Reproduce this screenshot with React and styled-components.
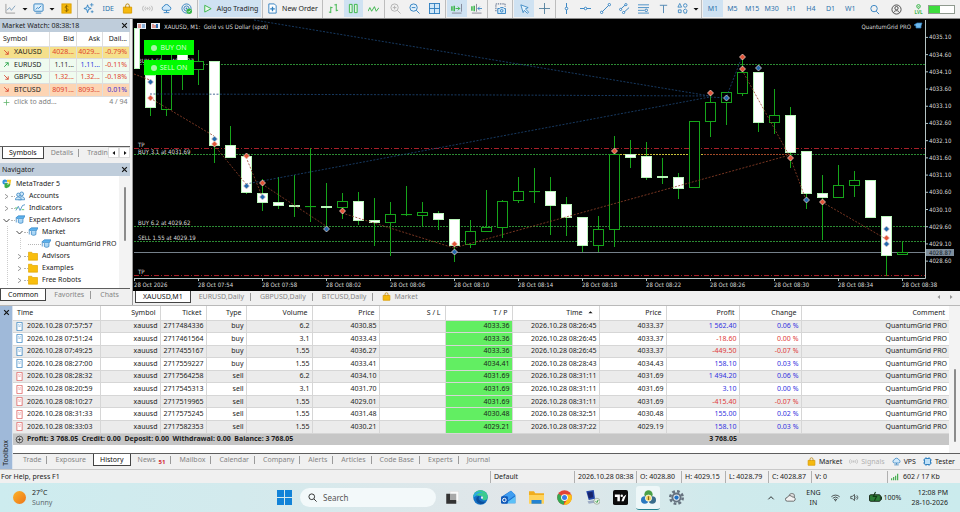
import React, { useState } from "react";
import styled, { createGlobalStyle } from "styled-components";

const GlobalStyle = createGlobalStyle`
  * { box-sizing: border-box; }
  body {
    margin: 0;
    background: #f0f0f0;
    color: #1c1c1c;
    font: 7px/10px "Noto Sans", "Open Sans", sans-serif;
  }
  button, input {
    font: inherit;
    color: inherit;
    padding: 0;
    border: 0;
    background: none;
  }
  a { color: inherit; text-decoration: none; }
  svg { display: block; flex: none; }
`;

const BLUE = "#2f7fbf";
const GREEN = "#35b345";

/* ---------- icons ---------- */

const ICONS = {
  lineChart: <><path d="M1 1v10h10" stroke="#999" /><path d="M2 8l3-3 2 3 4-5" stroke="#7fa0bb" /></>,
  template: <><rect x="1" y="1" width="10" height="8" rx="1" fill="#d9edfb" stroke={BLUE} /><path d="M3 7l2-2 1 1 3-3M3 11h6" stroke={BLUE} /></>,
  dollar: <><rect x="1" y="1" width="10" height="10" fill="#f4b80c" stroke="#dca000" /><path d="M8 4C7 3 4.500 3 4.500 4.600S8 6 8 7.600 5 9 4 8M6 2v8" stroke="#7d5900" strokeWidth=".8" /></>,
  sparkle: <><path d="M5 2l1 3 3 1-3 1-1 3.500L4 7 1 6l3-1z" fill="#d9edfb" stroke={BLUE} /><path d="M9.500 0v4M7.500 2h4M10 8v3M8.500 9.500h3" stroke={BLUE} strokeWidth=".8" /></>,
  bag: <><path d="M1.500 4.500h9V11h-9z" fill="#f5b90e" stroke="#d99b00" /><path d="M4 5V3a2 2 0 0 1 4 0v2" stroke="#b98400" /></>,
  signal: <g stroke="#aaa" strokeWidth=".8"><circle cx="6" cy="6" r=".8" /><path d="M4 4a3 3 0 0 0 0 4M8 4a3 3 0 0 1 0 4M2 3a4 4 0 0 0 0 6M10 3a4 4 0 0 1 0 6" /></g>,
  cloud: <><path d="M3 8a2.200 2.200 0 0 1 0-4.300 3.200 3.200 0 0 1 6 0A2.200 2.200 0 0 1 9 8z" fill="#cfe8fa" stroke={BLUE} /><path d="M6 8v2M3 10.500h6" stroke={BLUE} /></>,
  radar: <><circle cx="6" cy="6" r="5" stroke={BLUE} /><circle cx="6" cy="6" r="2.800" stroke={BLUE} /><circle cx="6" cy="6" r="1" fill={BLUE} /><circle cx="9" cy="9" r="3" fill={GREEN} /><path d="M7.500 9l1 1 2-2" stroke="#fff" strokeWidth=".8" /></>,
  play: <path d="M3 2.500l7 3.700-7 3.700z" fill="#e9f8ea" stroke={GREEN} />,
  newOrder: <><path d="M2 1h6l2 2v8H2z" fill="#fff" stroke={BLUE} /><path d="M6 4v5M3.500 6.500h5" stroke={BLUE} strokeWidth="1.400" /></>,
  bars: <path d="M3 4v7M1 10h2M3 5h2M9 1v8M7 2h2M9 8h2" stroke={GREEN} />,
  candles: <path d="M1.500 1.500h3v9h-3zM7 1.500h3v9H7z" fill="#dff5e1" stroke={GREEN} />,
  zigzag: <path d="M0 9l2-4 2 4 3-5 2 5 3-4" stroke={GREEN} />,
  zoomIn: <g stroke="#b0b0b0"><circle cx="5" cy="5" r="4" /><path d="M8 8l3.500 3.500M3 5h4M5 3v4" /></g>,
  zoomOut: <g stroke={BLUE}><circle cx="5" cy="5" r="4" fill="#e2f1fb" /><path d="M8 8l3.500 3.500M3 5h4" /></g>,
  tile: <><rect x=".5" y=".5" width="11" height="11" fill="#cfe7f8" stroke={BLUE} /><path d="M6 0v12M0 6h12" stroke={BLUE} /></>,
  shiftEnd: <><path d="M1 3.500v5M3.500 3v6" stroke={GREEN} strokeWidth="1.600" /><path d="M5 6h4.500M7.500 4l2 2-2 2" stroke={GREEN} /><path d="M11.500 1v8.500M1 11h10.500" stroke="#778" strokeWidth=".9" /></>,
  autoScroll: <><path d="M1 3.500v5M3.500 3v6" stroke={GREEN} strokeWidth="1.600" /><path d="M6 1v8.500M1 11h10.500" stroke="#778" strokeWidth=".9" /><path d="M12 6H7.500M9.500 4l-2 2 2 2" stroke={BLUE} strokeWidth=".9" /></>,
  camera: <><path d="M1 9V1h10v3" stroke="#457" strokeDasharray="1.500 1" /><path d="M3 6h2l1-1h3l1 1h1.500v5.500H3z" fill="#cfe7f8" stroke={BLUE} /><circle cx="7.300" cy="8.500" r="1.400" stroke={BLUE} /></>,
  cursor: <path d="M2 2l8 3-3 1.500 3.500 3.500-1.500 1.200L5.800 8 4.500 10.500z" fill="#e4f3fc" stroke={BLUE} strokeWidth=".9" />,
  cross: <path d="M6 0v12M0 6h12M4.500 6h3M6 4.500v3" stroke="#55829f" />,
  vline: <><path d="M6 0v12" stroke={BLUE} /><circle cx="6" cy="6" r="1.400" fill="#fff" stroke={BLUE} /></>,
  hline: <><path d="M0 6h12" stroke={BLUE} /><circle cx="6" cy="6" r="1.400" fill="#fff" stroke={BLUE} /></>,
  trend: <g stroke={BLUE} fill="#fff"><path d="M2 10l8-8" /><circle cx="1.800" cy="10.200" r="1.300" /><circle cx="10.200" cy="1.800" r="1.300" /></g>,
  channel: <g stroke={BLUE} fill="#fff"><path d="M1.500 7l6-5.500M5 10.500L11 5" /><circle cx="1.800" cy="7" r="1.200" /><circle cx="7.500" cy="1.800" r="1.200" /><circle cx="5" cy="10.400" r="1.200" /></g>,
  fibo: <g stroke={BLUE}><path d="M0 2h12M0 5h12M0 8h7M0 11h12" strokeWidth=".9" /><circle cx="9" cy="8" r="1.400" /></g>,
  text: <path d="M2 2.500h8M6 2.500V11" stroke="#4d83b0" />,
  shapes: <g stroke={BLUE} strokeWidth=".9"><path d="M1 4.500l2-4 2 4zM1.500 7.500h3v3h-3zM9 6.500l2 1.500-.8 3H7.800L7 8z" /><circle cx="9" cy="2.700" r="1.900" /></g>,
  search: <><circle cx="5.500" cy="5" r="3.500" stroke={BLUE} /><path d="M8 8l3 3" stroke={BLUE} /></>,
  user: <g stroke="#444"><circle cx="6" cy="6" r="5" /><circle cx="6" cy="4.500" r="1.800" /><path d="M2.800 9.500c1-3 5.400-3 6.400 0" /></g>,
  level: <><circle cx="6" cy="2.600" r="2" stroke={GREEN} /><path d="M5 2.600h2M6 4.600v1.200" stroke={GREEN} strokeWidth=".8" /><text x="6" y="11" textAnchor="middle" fontSize="5" fontWeight="bold" fill={GREEN}>LVL</text></>,
  accounts: <g fill="#cce6f9" stroke={BLUE} strokeWidth=".9"><circle cx="8" cy="3.500" r="2.300" /><path d="M4 10.500c0-5 8-5 7.500 0z" /><circle cx="4" cy="4.500" r="2" /><path d="M.5 10.500c0-4.500 7-4.500 7 0z" /></g>,
  indicator: <><path d="M1 9l3-5 2 5 3-6 3-1" stroke={BLUE} strokeWidth=".9" /><path d="M0 6h3M8 8h3" stroke={GREEN} strokeWidth=".9" /></>,
  expert: <><path d="M1 3.500L4 1h8l-2 3.500H4z" fill="#5cb2ee" stroke={BLUE} strokeWidth=".8" /><path d="M4 5v4c2 1.500 4 1 5.500 0V5M1.500 4v5" fill="#a9d6f6" stroke={BLUE} strokeWidth=".9" /></>,
  folder: <path d="M.5 1.500h4l1 1.500h6v8H.5z" fill="#f9be0d" stroke="#e0a500" strokeWidth=".8" />,
  meta: <><circle cx="3.500" cy="3.500" r="3" fill="#2f92dc" /><path d="M6 1h5l-1 6H6z" fill="#f4c72a" /><path d="M3 6c2-2 6-1 7 1-1 4-6 5-7 3z" fill="#3eae49" /><path d="M3 4h5l-1 3" stroke="#fff" /></>,
  chip: <><rect x="2" y="2" width="8" height="8" rx="1" fill="#bfe1f8" stroke={BLUE} strokeWidth="1.300" /><path d="M4 0v2M8 0v2M4 10v2M8 10v2M0 4h2M0 8h2M10 4h2M10 8h2" stroke={BLUE} /></>,
  doc: <><path d="M2.500 .5h7v11h-7z" fill="#fff" stroke="currentColor" /><path d="M4.500 3.500h1M6.500 3.500h1M4.500 5.500h3" stroke="currentColor" strokeWidth=".8" /></>,
  plusCircle: <><circle cx="6" cy="6" r="4.500" stroke="#222" strokeWidth=".9" /><path d="M3.500 6h5M6 3.500v5" stroke="#222" strokeWidth=".9" /></>,
  plus: <path d="M6 1v10M1 6h10" stroke="#5bb267" strokeWidth="1.300" />,
  down: <path d="M2 2l7 7M9 4v5H4" stroke="#d8452e" strokeWidth="1.500" />,
  up: <path d="M2 10l7-7M4 3h5v5" stroke="#27a348" strokeWidth="1.500" />,
  close: <path d="M2 2l8 8M10 2l-8 8" stroke="#111" strokeWidth="2" />,
  chevronRight: <path d="M4 3l4 3-4 3" stroke="#777" />,
  chevronDown: <path d="M2 4l4 4 4-4" stroke="#333" strokeWidth="1.200" />,
  chevronUp: <path d="M2 8l4-4 4 4" stroke="#222" strokeWidth="1.400" />,
  caret: <path d="M1 4h10L6 9z" fill="#111" />,
  triLeft: <path d="M8 2v8L3 6z" fill="#111" />,
  triRight: <path d="M4 2v8l5-4z" fill="#111" />,
  bars4: <path d="M1 11V8M4 11V6M7 11V4M10 11V1" stroke="#2fa53b" strokeWidth="1.600" />,
  weather: <><circle cx="7.500" cy="4.500" r="3" fill="#ddd" stroke="#555" strokeWidth=".7" /><path d="M2.500 10a2 2 0 0 1 0-4 3 3 0 0 1 5.500-.5A2.300 2.300 0 0 1 9.500 10z" fill="#f2f2f2" stroke="#444" strokeWidth=".8" /></>,
  wifi: <g stroke="#222"><path d="M.5 5a8 8 0 0 1 11 0M2.300 7a5.500 5.500 0 0 1 7.400 0M4 9a3 3 0 0 1 4 0" /><circle cx="6" cy="10.300" r=".5" /></g>,
  speaker: <g stroke="#222" strokeWidth=".9"><path d="M1 4.500h2L6 2v8L3 7.500H1zM7.500 4.500a2 2 0 0 1 0 3M9 3a4 4 0 0 1 0 6" /></g>,
  battery: <><rect x=".5" y="3.500" width="10" height="6" rx="1" fill="#2b7d36" stroke="#1b2b1b" strokeWidth=".9" /><path d="M11.500 5v3M6 1L4 5h3L5 9" stroke="#113a16" /></>,
  start: <path d="M0 0h5.600v5.600H0zM6.400 0H12v5.600H6.400zM0 6.400h5.600V12H0zM6.400 6.400H12V12H6.400z" fill="#1283d8" />,
  taskView: <><rect x="4" y="1" width="7" height="8" fill="#fafafa" stroke="#ddd" strokeWidth=".5" /><path d="M1 3h3v5h5v3H1z" fill="#333" /><path d="M4 3h5v5H4z" fill="#a8a8a8" /></>,
  edge: <><circle cx="6" cy="6" r="5.800" fill="#1471c4" /><path d="M.2 6C0-1 11-2 11.800 5.500c.1 3-3.300 3.300-4.300 2 1-2-.5-3.500-2.500-2.700C3 4 1 4.500 .2 6z" fill="#3ccb8f" /><path d="M.2 6C.5 1 6 0 8.500 3 6 1.500 3 2.500 2 5z" fill="#2aa6e8" /><path d="M5 5c-1.500 2.500 1 5 4.800 4.300C8 12 4.500 11.800 3 9 2 7 3 5 5 5z" fill="#0c4f9c" /><path d="M7.300 7.400c-1.200-.6-1.300-2.200-.3-2.400 1.200 0 1.500 1.400.3 2.400z" fill="#e4eef0" /></>,
  outlook: <><path d="M1 5l7-4.500L11.500 4v6.500H2z" fill="#1c6fd0" /><path d="M2 5l6-4.500L11.500 4 6 8z" fill="#3f9df0" /><path d="M6 9l5.500-4v5.500H4z" fill="#5cc0f7" /><rect x="0" y="5" width="5.500" height="6" rx="1" fill="#0f58b8" /><circle cx="2.700" cy="8" r="1.400" stroke="#fff" strokeWidth=".8" /></>,
  explorer: <><path d="M0 1h4l1 1.500h7V10H0z" fill="#f0ad1e" /><path d="M0 4h12v7H0z" fill="#ffd35b" /><path d="M2 8h8v3H2z" fill="#2382d2" /></>,
  chrome: <><circle cx="6" cy="6" r="5.800" fill="#e34335" /><path d="M6 6L1 3a5.800 5.800 0 0 0 4.500 8.800z" fill="#33a853" /><path d="M6 3.500h5.300A5.800 5.800 0 0 1 5.500 11.800L8.500 7z" fill="#fbc116" /><circle cx="6" cy="6" r="2.700" fill="#fff" /><circle cx="6" cy="6" r="2" fill="#3b7ee8" /></>,
  remote: <><path d="M1 1l6-1 1 7-5 1z" fill="#2345a8" /><path d="M2 2l4-.7.600 4.500-3.600.700z" fill="#17246b" /><path d="M2 9l6-1 1 2-6 1z" fill="#9cabc4" /><circle cx="9.500" cy="9" r="2.400" fill="#e8efe6" stroke="#8a9a88" strokeWidth=".5" /><path d="M8.500 9l1 1 1-2" stroke="#2e9b3f" strokeWidth=".8" /></>,
  tv: <><rect x="0" y="0" width="12" height="12" rx="1.500" fill="#0c0c0c" /><path d="M1.500 3.500h4V9h-2V5.500h-2zM8 5.500L10.700 3.500 8.500 9H6.800z" fill="#fff" /><circle cx="7" cy="4.500" r="1" fill="#fff" /></>,
  mt: <><circle cx="6" cy="3.500" r="3.300" fill="#4a9f47" /><circle cx="3" cy="8" r="3" fill="#2a79c0" /><circle cx="9" cy="8" r="3" fill="#3a6d8c" /><circle cx="6" cy="6.500" r="2.500" fill="#f6d667" stroke="#fff" strokeWidth=".6" /><path d="M6 5v3" stroke="#8a6a10" /></>,
  gear: <><circle cx="6" cy="6" r="5" stroke="#66727f" strokeWidth="2" strokeDasharray="2.200 1.700" /><circle cx="6" cy="6" r="4" fill="#66727f" /><circle cx="6" cy="6" r="2.500" fill="#dfe7ee" /><circle cx="6" cy="6" r="1.700" fill="#1f70c4" /></>,
  magnifier: <><circle cx="5" cy="5" r="3.800" stroke="#222" strokeWidth="1.200" /><path d="M8 8l3.500 3.500" stroke="#222" strokeWidth="1.200" /></>,
};

const Icon = ({ name, size = 11 }) => (
  <svg width={size} height={size} viewBox="0 0 12 12" fill="none" aria-hidden="true">
    {ICONS[name]}
  </svg>
);

/* ---------- toolbar ---------- */

const Page = styled.div`
  min-height: 100vh;
  display: flex;
  flex-direction: column;
`;

const Toolbar = styled.header`
  display: flex;
  align-items: stretch;
  height: 19px;
  background: #f1f1f1;
  border-bottom: 1px solid #8c8c8c;
`;

const Group = styled.div`
  display: flex;
  width: ${props => props.$width}px;
  padding: 0 1px;
  border-right: ${props => (props.$last ? "0" : "1px solid #bdbdbd")};
`;

const ToolButton = styled.button`
  display: flex;
  align-items: center;
  justify-content: center;
  gap: 4px;
  flex: ${props => (props.$narrow ? "0 0 8px" : "1 1 0")};
  min-width: 0;
  margin-bottom: 1px;
  white-space: nowrap;
  color: ${props => (props.$blue ? "#2f74ad" : "#1c1c1c")};
  background: ${props => (props.$on ? "#cfe2f2" : "transparent")};
`;

const ToolEnd = styled.div`
  display: flex;
  align-items: center;
  gap: 4px;
  margin-left: auto;
  padding-right: 5px;
`;

const ToolIcons = styled.div`
  display: flex;
  gap: 11px;
`;

const Meter = styled.div`
  width: 27px;
  height: 9px;
  border: 1px solid #8f9a8f;
  background: linear-gradient(90deg, #3ddc3d 43%, #fff 43%);
`;

const TOOL_GROUPS = [
  { width: 78, items: ["lineChart", "caret", "template", "caret", "dollar"] },
  { width: 120, items: ["sparkle", "IDE", "bag", "signal", "cloud", "radar"] },
];

const MORE_GROUPS = [
  { width: 62, items: ["bars", "candles", "zigzag"], on: "candles" },
  { width: 61, items: ["zoomIn", "zoomOut", "tile"] },
  { width: 42, items: ["shiftEnd", "autoScroll"], on: "shiftEnd" },
  { width: 25, items: ["camera"] },
  { width: 43, items: ["cursor", "cross"], on: "cursor" },
  { width: 146, items: ["vline", "hline", "trend", "channel", "fibo", "text", "shapes", "caret"] },
];

const ToolGroup = ({ group }) => (
  <Group $width={group.width}>
    {group.items.map((item, i) => (
      <ToolButton key={i} aria-label={item} $narrow={item === "caret"} $on={group.on === item} $blue>
        {item === "IDE" ? "IDE" : <Icon name={item} size={item === "caret" ? 6 : 11} />}
      </ToolButton>
    ))}
  </Group>
);

const FRAMES = ["M1", "M5", "M15", "M30", "H1", "H4", "D1", "W1"];

const TopBar = () => {
  const [frame, setFrame] = useState("M1");
  return (
    <Toolbar>
      {TOOL_GROUPS.map((g, i) => <ToolGroup key={i} group={g} />)}
      <Group $width={65}>
        <ToolButton $on><Icon name="play" />Algo Trading</ToolButton>
      </Group>
      <Group $width={60}>
        <ToolButton><Icon name="newOrder" />New Order</ToolButton>
      </Group>
      {MORE_GROUPS.map((g, i) => <ToolGroup key={i} group={g} />)}
      <Group $width={159} $last>
        {FRAMES.map(f => (
          <ToolButton key={f} $blue $on={f === frame} onClick={() => setFrame(f)}>{f}</ToolButton>
        ))}
      </Group>
      <ToolEnd>
        <ToolIcons>
          <Icon name="search" />
          <Icon name="user" />
          <Icon name="level" />
        </ToolIcons>
        <Meter />
      </ToolEnd>
    </Toolbar>
  );
};

/* ---------- tabs ---------- */

const TabBar = styled.nav`
  display: flex;
  height: ${props => props.$height}px;
  padding-left: ${props => props.$indent || 0}px;
  background: #f0f0f0;
  overflow: hidden;
  border-top: ${props => (props.$line ? "1px solid #5e5e5e" : "0")};
`;

const Tab = styled.button`
  display: flex;
  align-items: center;
  gap: 3px;
  flex: none;
  height: 12px;
  padding: 0 ${props => props.$pad}px;
  white-space: nowrap;
  color: ${props => (props.$active ? "#111" : "#858585")};
  background-color: ${props => (props.$active ? "#fff" : "transparent")};
  background-image: ${props => (props.$divider ? "linear-gradient(#9a9a9a, #9a9a9a)" : "none")};
  background-position: right center;
  background-size: 1px 8px;
  background-repeat: no-repeat;
  border: ${props => (props.$active ? "solid #444" : "solid transparent")};
  border-width: 0 1px 1px;
`;

const Badge = styled.span`
  font-size: 6px;
  font-weight: bold;
  line-height: 6px;
  align-self: flex-end;
  color: #d32632;
`;

const Tabs = ({ items, initial, pad = 6 }) => {
  const [active, setActive] = useState(initial);
  return items.map((item, i) => {
    const next = items[i + 1];
    return (
      <Tab
        key={item.label}
        $pad={pad}
        $active={item.label === active}
        $divider={item.label !== active && next && next.label !== active}
        onClick={() => setActive(item.label)}
      >
        {item.icon && <Icon name={item.icon} size={9} />}
        {item.label}
        {item.badge && <Badge>{item.badge}</Badge>}
      </Tab>
    );
  });
};

const TabArrow = styled.button`
  display: flex;
  align-items: center;
  justify-content: center;
  flex: 0 0 11px;
  height: 11px;
  background: #fff;
  border: 1px solid #dadada;
`;

const TabClip = styled.div`
  display: flex;
  flex: 1 1 0;
  min-width: 0;
  overflow: hidden;
`;

/* ---------- side panels ---------- */

const Workspace = styled.div`
  display: flex;
`;

const Side = styled.aside`
  flex: none;
  width: 133px;
  padding-right: 2px;
  border-right: 1px solid #9a9a9a;
`;

const PanelTitle = styled.h2`
  display: flex;
  align-items: center;
  justify-content: space-between;
  height: 13px;
  margin: 0;
  padding: 0 2px;
  font-size: 7px;
  font-weight: normal;
  background: #bfcddb;
`;

const PanelBody = styled.div`
  height: ${props => props.$height}px;
  display: flex;
  align-items: flex-start;
  overflow: hidden;
  background: #fff;
`;

const WatchTable = styled.table`
  width: 100%;
  height: 76px;
  table-layout: fixed;
  border-collapse: collapse;
  th, td {
    height: 12px;
    padding: 0 2px 0 0;
    font-weight: normal;
    text-align: right;
    white-space: nowrap;
    overflow: hidden;
    border: solid #dedede;
    border-width: 0 1px 1px 0;
  }
  th { height: 14px; }
  th:first-child, td:first-child { text-align: left; padding-left: 3px; }
  tfoot td { border: 0; color: #808080; }
`;

const WatchRow = styled.tr`
  background: ${props => props.$bg};
`;

const Quote = styled.td`
  color: ${props => props.$color};
`;

const WithIcon = styled.span`
  display: flex;
  align-items: center;
  gap: ${props => props.$gap || 4}px;
`;

const QUOTES = [
  { dir: "down", bg: "#f5e08b", symbol: "XAUUSD", bid: ["4028...", "#e0442c"], ask: ["4029...", "#e0442c"], day: ["-0.79%", "#e0442c"] },
  { dir: "up", bg: "#effbef", symbol: "EURUSD", bid: ["1.11...", "#333"], ask: ["1.11...", "#2a3ee0"], day: ["-0.11%", "#e0442c"] },
  { dir: "down", bg: "#effbef", symbol: "GBPUSD", bid: ["1.32...", "#e0442c"], ask: ["1.32...", "#e0442c"], day: ["-0.18%", "#e0442c"] },
  { dir: "down", bg: "#fdd5b4", symbol: "BTCUSD", bid: ["8091...", "#e0442c"], ask: ["8093...", "#e0442c"], day: ["0.01%", "#4430d0"] },
];

const Tree = styled.ul`
  flex: 1;
  min-width: 0;
  margin: 0;
  padding: 2px 0 0 2px;
  list-style: none;
`;

const TreeRow = styled.li`
  display: flex;
  align-items: center;
  height: 12px;
  white-space: nowrap;
`;

const Guide = styled.span`
  width: 13px;
  height: 12px;
  background: linear-gradient(#ccc 50%, transparent 50%) 5px 0 / 1px 2px repeat-y;
`;

const Expander = styled.span`
  width: 13px;
  display: flex;
  align-items: center;
  &::after {
    content: "";
    flex: 1;
    border-top: 1px dotted #b5b5b5;
  }
`;

const TreeLabel = styled.span`
  margin-left: 4px;
`;

const ScrollTrack = styled.div`
  display: flex;
  flex-direction: column;
  align-items: center;
  align-self: stretch;
  justify-content: ${props => (props.$end ? "flex-end" : "flex-start")};
  flex: 0 0 11px;
  padding: 11px 0;
  background: #f3f3f3;
`;

const ScrollThumb = styled.div`
  width: 2px;
  height: ${props => props.$size}px;
  background: #8b8b8b;
  border-radius: 1px;
`;

const TREE = [
  { level: 0, icon: "meta", label: "MetaTrader 5" },
  { level: 1, icon: "accounts", label: "Accounts", mark: "chevronRight" },
  { level: 1, icon: "indicator", label: "Indicators", mark: "chevronRight" },
  { level: 1, icon: "expert", label: "Expert Advisors", mark: "chevronDown" },
  { level: 2, icon: "expert", label: "Market", mark: "chevronDown" },
  { level: 3, icon: "expert", label: "QuantumGrid PRO" },
  { level: 2, icon: "folder", label: "Advisors", mark: "chevronRight" },
  { level: 2, icon: "folder", label: "Examples", mark: "chevronRight" },
  { level: 2, icon: "folder", label: "Free Robots", mark: "chevronRight" },
];

const SideTabs = styled.div`
  height: 17px;
`;

const WATCH_TABS = [{ label: "Symbols" }, { label: "Details" }, { label: "Tradin" }];
const NAV_TABS = [{ label: "Common" }, { label: "Favorites" }, { label: "Chats" }];

const MarketWatch = () => (
  <>
    <PanelTitle>Market Watch: 08:38:18<Icon name="close" size={7} /></PanelTitle>
    <PanelBody $height={114}>
      <WatchTable>
        <colgroup><col /><col width="27" /><col width="26" /><col width="27" /></colgroup>
        <thead>
          <tr><th>Symbol</th><th>Bid</th><th>Ask</th><th>Dail...</th></tr>
        </thead>
        <tbody>
          {QUOTES.map(q => (
            <WatchRow key={q.symbol} $bg={q.bg}>
              <td><WithIcon><Icon name={q.dir} size={7} />{q.symbol}</WithIcon></td>
              <Quote $color={q.bid[1]}>{q.bid[0]}</Quote>
              <Quote $color={q.ask[1]}>{q.ask[0]}</Quote>
              <Quote $color={q.day[1]}>{q.day[0]}</Quote>
            </WatchRow>
          ))}
        </tbody>
        <tfoot>
          <tr>
            <td colSpan="3"><WithIcon><Icon name="plus" size={7} />click to add...</WithIcon></td>
            <td>4 / 94</td>
          </tr>
        </tfoot>
      </WatchTable>
    </PanelBody>
    <SideTabs>
      <TabBar $height={13} $indent={2} $line>
        <TabClip><Tabs items={WATCH_TABS} initial="Symbols" /></TabClip>
        <TabArrow aria-label="Previous tabs"><Icon name="triLeft" size={6} /></TabArrow>
        <TabArrow aria-label="Next tabs"><Icon name="triRight" size={6} /></TabArrow>
      </TabBar>
    </SideTabs>
  </>
);

const Navigator = () => (
  <>
    <PanelTitle>Navigator<Icon name="close" size={7} /></PanelTitle>
    <PanelBody $height={112}>
      <Tree>
        {TREE.map(node => (
          <TreeRow key={node.label}>
            {node.level > 1 && <Guide />}
            {node.level > 2 && <Guide />}
            {node.level > 0 && <Expander>{node.mark && <Icon name={node.mark} size={9} />}</Expander>}
            <Icon name={node.icon} size={10} />
            <TreeLabel>{node.label}</TreeLabel>
          </TreeRow>
        ))}
      </Tree>
      <ScrollTrack><ScrollThumb $size={54} /></ScrollTrack>
    </PanelBody>
    <TabBar $height={14} $line>
      <Tabs items={NAV_TABS} initial="Common" pad={7} />
    </TabBar>
  </>
);

/* ---------- chart ---------- */

const ChartArea = styled.section`
  flex: 1 1 0;
  min-width: 0;
`;

const ChartFrame = styled.div`
  position: relative;
  background: #000;
  svg { width: 100%; height: auto; }
`;

const ChartButtons = styled.div`
  position: absolute;
  top: 21px;
  left: 11px;
  display: grid;
  gap: 5px;
`;

const TradeButton = styled.button`
  display: flex;
  align-items: center;
  justify-content: center;
  gap: 3px;
  width: 50px;
  height: 15px;
  font-size: 7px;
  color: #d5ffd5;
  background: #00fb00;
  &::before {
    content: "";
    width: 6px;
    height: 6px;
    border-radius: 50%;
    background: #a5f5a5;
  }
`;

const ChartText = styled.text`
  font: 6px "DejaVu Sans Condensed", "DejaVu Sans", sans-serif;
  fill: ${props => props.$fill || "#dcdcdc"};
`;

// [wick top, wick bottom, body top, body bottom, falling]
const CANDLES = [
  [28, 68, 28, 68, 1],
  [75, 116, 75, 107, 1],
  [45, 116, 50, 109, 0],
  [54, 90, 54, 61, 1],
  [50, 85, 61, 69, 0],
  [61, 163, 61, 145, 1],
  [126, 157, 145, 157, 1],
  [156, 194, 156, 192, 1],
  [179, 211, 193, 202, 1],
  [177, 209, 202, 205, 1],
  [175, 217, 205, 206, 1],
  [148, 222, 206, 206, 0],
  [183, 229, 206, 207, 1],
  [193, 219, 201, 207, 0],
  [192, 225, 201, 220, 1],
  [198, 246, 220, 222, 1],
  [202, 256, 214, 222, 0],
  [186, 216, 214, 214, 0],
  [202, 227, 212, 215, 0],
  [211, 230, 213, 219, 1],
  [219, 262, 219, 245, 1],
  [220, 248, 231, 244, 0],
  [190, 232, 227, 231, 0],
  [200, 238, 201, 227, 0],
  [177, 203, 191, 200, 0],
  [168, 203, 191, 191, 0],
  [177, 235, 191, 205, 1],
  [197, 236, 204, 217, 1],
  [217, 252, 217, 245, 1],
  [216, 252, 229, 245, 0],
  [136, 247, 154, 229, 0],
  [140, 168, 154, 157, 1],
  [142, 180, 156, 177, 1],
  [158, 184, 176, 177, 1],
  [173, 199, 177, 188, 1],
  [121, 188, 121, 187, 0],
  [93, 137, 102, 121, 0],
  [92, 125, 92, 102, 0],
  [57, 96, 72, 93, 0],
  [72, 132, 72, 122, 1],
  [89, 134, 115, 122, 0],
  [107, 168, 115, 152, 1],
  [151, 209, 151, 193, 1],
  [175, 240, 193, 197, 1],
  [165, 198, 185, 197, 0],
  [171, 197, 180, 185, 0],
  [180, 217, 180, 217, 1],
  [216, 276, 216, 255, 1],
  [241, 255, 252, 254, 0],
];

const SELL = "#e2553a";
const BUY = "#2468ac";

// [x, y, colour]
const MARKS = [
  [150, 82, BUY], [150, 98, SELL], [214, 139, BUY], [214, 144, SELL],
  [246, 156, SELL], [246, 186, BUY], [262, 183, SELL], [262, 197, BUY],
  [326, 229, BUY], [342, 211, SELL], [454, 244, SELL], [454, 252, BUY],
  [614, 151, SELL], [710, 93, SELL], [726, 98, BUY], [742, 57, SELL],
  [742, 69, SELL], [758, 68, BUY], [790, 158, SELL], [806, 200, BUY],
  [822, 202, SELL], [886, 229, BUY], [886, 238, SELL], [886, 244, BUY],
];

const SELL_PATHS = "M134 74L150 80M150 98L214 136M214 145L246 184M246 157L262 196M262 184L326 226M342 213L454 248L790 155M742 70L790 157L806 200M822 202L886 239";
const BUY_PATHS = "M254 20L710 96M150 94L500 95L710 96M246 184L710 97L726 98L742 57";

const LEVELS = [
  { y: 147, label: "TP" },
  { y: 154, label: "BUY 3.1 at 4031.69" },
  { y: 225, label: "BUY 6.2 at 4029.62" },
  { y: 240, label: "SELL 1.55 at 4029.19" },
  { y: 274, label: "TP" },
  { y: 63, label: "BUY 1.55 at 4034.37" },
];

const PRICES = Array.from({ length: 14 }, (_, i) => (4035.1 - i * 0.5).toFixed(2));
const TIMES = ["28 Oct 2026", "28 Oct 07:54", "28 Oct 07:58", "28 Oct 08:02", "28 Oct 08:06", "28 Oct 08:10", "28 Oct 08:14", "28 Oct 08:18", "28 Oct 08:22", "28 Oct 08:26", "28 Oct 08:30", "28 Oct 08:34", "28 Oct 08:38"];

const Chart = () => (
  <svg viewBox="133 19 827 272" role="img" aria-label="XAUUSD M1 chart">
    <path d="M134 64.500H925M134 154.500H925M134 226.500H925M134 241.500H925" stroke="#2c8a33" strokeDasharray="2 1" />
    <path d="M614 154.500H704" stroke="#c9c23a" strokeDasharray="2 1" />
    <path d="M704 154.500H790" stroke="#a14b28" strokeDasharray="2 1" />
    <path d="M134 148.500H925M134 275.500H925" stroke="#a81f28" strokeDasharray="5 2 1 2" />
    <path d="M134 252.500H925" stroke="#75808a" />
    {LEVELS.map((l, i) => <ChartText key={i} x="138" y={l.y}>{l.label}</ChartText>)}
    {CANDLES.map(([hi, lo, top, bottom, falling], i) => {
      const x = 134 + i * 16;
      const first = i === 0;
      return (
        <g key={i} stroke="#16a51a">
          <path d={`M${x + 0.5} ${hi}V${top}M${x + 0.5} ${bottom}V${lo}`} />
          <rect
            x={first ? x + 0.5 : x - 4.5}
            y={top + 0.5}
            width={first ? 5 : 10}
            height={Math.max(bottom - top, 0.1)}
            fill={falling ? "#fff" : "#000"}
            stroke={falling ? "#b9f5b9" : "#16a51a"}
          />
        </g>
      );
    })}
    <path d={BUY_PATHS} fill="none" stroke="#1d4878" strokeWidth=".8" strokeDasharray="2 1.500" />
    <path d={SELL_PATHS} fill="none" stroke="#94432a" strokeWidth=".8" strokeDasharray="2 1.500" />
    {MARKS.map(([x, y, color], i) => (
      <path key={i} d={`M${x + 0.5} ${y - 3}l3 3-3 3-3-3z`} fill={color} stroke="#f4dcd4" strokeWidth=".7" />
    ))}
    <path d="M925.500 20V278.500M134 278.500H925.500" stroke="#b4c4c4" fill="none" />
    {PRICES.map((p, i) => {
      const y = 37.4 + i * 17.21;
      return (
        <g key={p}>
          <path d={`M926 ${y}h2`} stroke="#b4c4c4" />
          <ChartText x="929" y={y + 2}>{p}</ChartText>
        </g>
      );
    })}
    <rect x="926" y="249" width="28" height="7" fill="#7f8e9c" />
    <ChartText x="929" y="255" $fill="#101820">4028.87</ChartText>
    {TIMES.map((t, i) => (
      <g key={t}>
        <path d={`M${134.5 + i * 64} 279v2`} stroke="#b4c4c4" />
        <ChartText x={134 + i * 64} y="287">{t}</ChartText>
      </g>
    ))}
    <g>
      <path d="M137 23h9v6h-9z" fill="#e8eef5" />
      <path d="M138 25h3M138 27h3" stroke="#d0402e" />
      <path d="M142 25h3M142 27h3" stroke="#2c6fb4" />
      <path d="M151 23h9v6h-9z" fill="#e8eef5" />
      <path d="M153 24v4M155 25v3" stroke="#d0402e" />
      <path d="M157 24v4" stroke="#2c6fb4" strokeWidth="2" />
    </g>
    <ChartText x="164" y="29">XAUUSD, M1:&nbsp; Gold vs US Dollar (spot)</ChartText>
    <ChartText x="911" y="29" textAnchor="end">QuantumGrid PRO</ChartText>
    <path d="M914 25l3-2h5l-1 3v2h-5v-2z" fill="#6fb9ec" stroke="#2f7fbf" strokeWidth=".7" />
  </svg>
);

const ChartTabs = styled(TabBar)`
  padding-right: 6px;
`;

const TabScroll = styled.span`
  display: flex;
  gap: 6px;
  align-items: center;
  height: 12px;
  margin-left: auto;
  opacity: 0.4;
`;

const CHART_TABS = [
  { label: "XAUUSD,M1" },
  { label: "EURUSD,Daily" },
  { label: "GBPUSD,Daily" },
  { label: "BTCUSD,Daily" },
  { label: "Market", icon: "bag" },
];

const ChartPanel = () => (
  <ChartArea>
    <ChartFrame>
      <Chart />
      <ChartButtons>
        <TradeButton>BUY ON</TradeButton>
        <TradeButton>SELL ON</TradeButton>
      </ChartButtons>
    </ChartFrame>
    <ChartTabs $height={14} $indent={2}>
      <Tabs items={CHART_TABS} initial="XAUUSD,M1" pad={7} />
      <TabScroll><Icon name="triLeft" size={6} /><Icon name="triRight" size={6} /></TabScroll>
    </ChartTabs>
  </ChartArea>
);

/* ---------- toolbox ---------- */

const Toolbox = styled.section`
  display: flex;
  border-top: 1px solid #b9b9b9;
`;

const ToolboxStrip = styled.div`
  flex: 0 0 13px;
  display: flex;
  flex-direction: column;
  align-items: center;
  justify-content: space-between;
  padding: 3px 0;
  background: #9fb9d9;
  border-right: 1px solid #dbe4ee;
`;

const Vertical = styled.span`
  writing-mode: vertical-rl;
  transform: rotate(180deg);
`;

const ToolboxMain = styled.div`
  flex: 1;
  min-width: 0;
`;

const TableWrap = styled.div`
  display: flex;
  align-items: flex-start;
  height: 147px;
  background: #fff;
`;

const History = styled.table`
  flex: 1;
  height: 139px;
  table-layout: fixed;
  border-collapse: collapse;
  th, td {
    height: 12px;
    padding: 0 2px;
    font-weight: normal;
    text-align: right;
    white-space: nowrap;
    border: solid #d6d6d6;
    border-width: 0 1px 1px 0;
  }
  th { height: 14px; padding: 0 4px; }
  th:last-child, td:last-child { border-right: 0; }
  th:first-child { text-align: left; }
  tbody tr:nth-child(odd) { background: #ebebeb; }
  tfoot td {
    font-weight: bold;
    background: #c6c6c6;
    border: 0;
  }
`;

const TakeProfit = styled.td`
  background: #62ee62;
`;

const Signed = styled.td`
  color: ${props => (props.$negative ? "#e03a3a" : "#3232e0")};
`;

const DealTime = styled(WithIcon)`
  > svg { color: ${props => (props.$sell ? "#dd5a5a" : "#2f7fbf")}; }
`;

const SortHead = styled.span`
  display: inline-flex;
  align-items: center;
  gap: 5px;
  padding-right: 2px;
  svg { transform: rotate(180deg); }
`;

const DEALS = [
  ["2026.10.28 07:57:57", "2717484336", "buy", "6.2", "4030.85", "4033.36", "2026.10.28 08:26:45", "4033.37", "1 562.40", "0.06 %"],
  ["2026.10.28 07:51:24", "2717461564", "buy", "3.1", "4033.43", "4033.36", "2026.10.28 08:26:45", "4033.37", "-18.60", "0.00 %"],
  ["2026.10.28 07:49:25", "2717455167", "buy", "1.55", "4036.27", "4033.36", "2026.10.28 08:26:45", "4033.37", "-449.50", "-0.07 %"],
  ["2026.10.28 08:27:00", "2717559227", "buy", "1.55", "4033.41", "4034.41", "2026.10.28 08:28:43", "4034.43", "158.10", "0.03 %"],
  ["2026.10.28 08:28:32", "2717564258", "sell", "6.2", "4034.10", "4031.69", "2026.10.28 08:31:11", "4031.69", "1 494.20", "0.06 %"],
  ["2026.10.28 08:20:59", "2717545313", "sell", "3.1", "4031.70", "4031.69", "2026.10.28 08:31:11", "4031.69", "3.10", "0.00 %"],
  ["2026.10.28 08:10:27", "2717519965", "sell", "1.55", "4029.01", "4031.69", "2026.10.28 08:31:11", "4031.69", "-415.40", "-0.07 %"],
  ["2026.10.28 08:31:33", "2717575245", "sell", "1.55", "4031.48", "4030.48", "2026.10.28 08:32:51", "4030.48", "155.00", "0.02 %"],
  ["2026.10.28 08:33:03", "2717582353", "sell", "1.55", "4030.21", "4029.21", "2026.10.28 08:37:22", "4029.19", "158.10", "0.03 %"],
];

const COLUMNS = [87, 60, 46, 40, 66, 67, 66, 67, 87, 67, 73, 62];

const BoxLinks = styled.div`
  display: flex;
  align-items: center;
  gap: 7px;
  margin-left: auto;
  padding-right: 5px;
`;

const BoxLink = styled.a`
  display: flex;
  align-items: center;
  gap: 3px;
  color: ${props => (props.$muted ? "#b0b0b0" : "#1c1c1c")};
`;

const BOX_TABS = [
  { label: "Trade" },
  { label: "Exposure" },
  { label: "History" },
  { label: "News", badge: "51" },
  { label: "Mailbox" },
  { label: "Calendar" },
  { label: "Company" },
  { label: "Alerts" },
  { label: "Articles" },
  { label: "Code Base" },
  { label: "Experts" },
  { label: "Journal" },
];

const ToolboxPanel = () => (
  <Toolbox>
    <ToolboxStrip>
      <Icon name="close" size={7} />
      <Vertical>Toolbox</Vertical>
    </ToolboxStrip>
    <ToolboxMain>
      <TableWrap>
        <History>
          <colgroup>
            {COLUMNS.map((w, i) => <col key={i} width={w} />)}
            <col />
          </colgroup>
          <thead>
            <tr>
              <th>Time</th><th>Symbol</th><th>Ticket</th><th>Type</th><th>Volume</th><th>Price</th>
              <th>S / L</th><th>T / P</th>
              <th><SortHead>Time <Icon name="caret" size={5} /></SortHead></th>
              <th>Price</th><th>Profit</th><th>Change</th><th>Comment</th>
            </tr>
          </thead>
          <tbody>
            {DEALS.map(([opened, ticket, type, volume, price, tp, closed, exit, profit, change]) => (
              <tr key={ticket}>
                <td><DealTime $gap={3} $sell={type === "sell"}><Icon name="doc" size={9} />{opened}</DealTime></td>
                <td>xauusd</td>
                <td>{ticket}</td>
                <td>{type}</td>
                <td>{volume}</td>
                <td>{price}</td>
                <td />
                <TakeProfit>{tp}</TakeProfit>
                <td>{closed}</td>
                <td>{exit}</td>
                <Signed $negative={profit.startsWith("-")}>{profit}</Signed>
                <Signed $negative={profit.startsWith("-")}>{change}</Signed>
                <td>QuantumGrid PRO</td>
              </tr>
            ))}
          </tbody>
          <tfoot>
            <tr>
              <td colSpan="10">
                <DealTime $gap={3}>
                  <Icon name="plusCircle" size={9} />
                  Profit: 3 768.05&nbsp; Credit: 0.00&nbsp; Deposit: 0.00&nbsp; Withdrawal: 0.00&nbsp; Balance: 3 768.05
                </DealTime>
              </td>
              <td>3 768.05</td>
              <td /><td />
            </tr>
          </tfoot>
        </History>
        <ScrollTrack $end><ScrollThumb $size={73} /></ScrollTrack>
      </TableWrap>
      <TabBar $height={16} $indent={3} $line>
        <Tabs items={BOX_TABS} initial="History" />
        <BoxLinks>
          <BoxLink href="#market"><Icon name="bag" size={9} />Market</BoxLink>
          <BoxLink href="#signals" $muted><Icon name="signal" size={9} />Signals</BoxLink>
          <BoxLink href="#vps"><Icon name="cloud" size={9} />VPS</BoxLink>
          <BoxLink href="#tester"><Icon name="chip" size={9} />Tester</BoxLink>
        </BoxLinks>
      </TabBar>
    </ToolboxMain>
  </Toolbox>
);

/* ---------- status bar and taskbar ---------- */

const StatusBar = styled.footer`
  display: flex;
  align-items: center;
  height: 14px;
  border-top: 1px solid #c9c9c9;
`;

const StatusCell = styled.span`
  display: flex;
  align-items: center;
  gap: 4px;
  flex: ${props => (props.$width ? `0 0 ${props.$width}px` : "1")};
  height: 12px;
  padding-left: ${props => (props.$width ? 3 : 1)}px;
  white-space: nowrap;
  border-left: ${props => (props.$width ? "1px solid #b0b0b0" : "0")};
`;

const STATUS = [
  [84, "Default"], [62, "2026.10.28 08:38"], [45, "O: 4028.80"], [44, "H: 4029.15"],
  [43, "L: 4028.79"], [43, "C: 4028.87"], [76, "V: 0"],
];

const Taskbar = styled.nav`
  flex: 1;
  display: grid;
  grid-template-columns: 1fr auto 1fr;
  align-items: center;
  min-height: 29px;
  background: linear-gradient(90deg, #cdecef 0%, #d3eaed 25%, #e2e6e9 55%, #cfeaec 75%, #cbebed 100%);
`;

const Weather = styled.div`
  display: flex;
  align-items: center;
  gap: 6px;
  padding-left: 13px;
`;

const Sun = styled.span`
  width: 13px;
  height: 13px;
  border-radius: 50%;
  background: linear-gradient(135deg, #fbb52a, #ee7318);
`;

const Stack = styled.span`
  display: flex;
  flex-direction: column;
  text-align: ${props => props.$align || "left"};
`;

const Muted = styled.span`
  color: #5f6b70;
`;

const Apps = styled.div`
  display: flex;
  align-items: center;
  gap: 4px;
`;

const AppButton = styled.button`
  display: flex;
  align-items: center;
  justify-content: center;
  width: 24px;
  height: 24px;
  border-radius: 3px;
  background: ${props => (props.$active ? "#eef7f8" : "transparent")};
  box-shadow: ${props => (props.$active ? "inset 0 -2px 0 -1px #26808f" : "none")};
`;

const SearchBox = styled.label`
  display: flex;
  align-items: center;
  gap: 6px;
  width: 136px;
  height: 19px;
  padding-left: 8px;
  border-radius: 10px;
  background: #f3f9fa;
  input {
    width: 100px;
    font-size: 8px;
    outline: none;
    &::placeholder { color: #555; opacity: 1; }
  }
`;

const Tray = styled.div`
  display: flex;
  align-items: center;
  justify-content: flex-end;
  gap: 10px;
  padding-right: 12px;
`;

const APPS = ["taskView", "edge", "outlook", "explorer", "chrome", "remote", "tv", "mt", "gear"];

const Desktop = () => (
  <Taskbar>
    <Weather>
      <Sun />
      <Stack><span>27°C</span><Muted>Sunny</Muted></Stack>
    </Weather>
    <Apps>
      <AppButton aria-label="Start"><Icon name="start" size={15} /></AppButton>
      <SearchBox>
        <Icon name="magnifier" size={9} />
        <input type="text" placeholder="Search" aria-label="Search" />
      </SearchBox>
      {APPS.map(a => (
        <AppButton key={a} aria-label={a} $active={a === "mt"}><Icon name={a} size={15} /></AppButton>
      ))}
    </Apps>
    <Tray>
      <Icon name="chevronUp" size={8} />
      <Icon name="weather" />
      <Stack $align="center"><span>ENG</span><span>IN</span></Stack>
      <Icon name="wifi" size={9} />
      <Icon name="speaker" size={9} />
      <WithIcon $gap={2}><Icon name="battery" size={13} />100%</WithIcon>
      <Stack $align="right"><span>12:08 PM</span><span>28-10-2026</span></Stack>
    </Tray>
  </Taskbar>
);

export default function App() {
  return (
    <Page>
      <GlobalStyle />
      <TopBar />
      <Workspace>
        <Side>
          <MarketWatch />
          <Navigator />
        </Side>
        <ChartPanel />
      </Workspace>
      <ToolboxPanel />
      <StatusBar>
        <StatusCell>For Help, press F1</StatusCell>
        {STATUS.map(([width, label]) => <StatusCell key={label} $width={width}>{label}</StatusCell>)}
        <StatusCell $width={73}><Icon name="bars4" size={8} />602 / 17 Kb</StatusCell>
      </StatusBar>
      <Desktop />
    </Page>
  );
}
